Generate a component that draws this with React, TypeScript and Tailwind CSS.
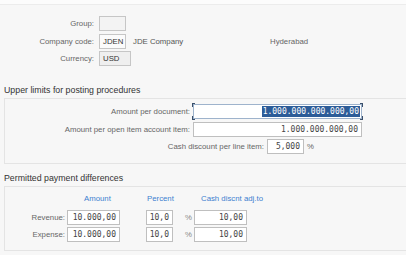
import React from "react";

const sans = { fontFamily: '"Liberation Sans", Arial, sans-serif' };

function Box({ w, bg = "bg-white", children, align = "justify-end", extra = "" }: { w: string; bg?: string; children?: React.ReactNode; align?: string; extra?: string }) {
  return (
    <div className={`${w} h-[15px] border border-[#bfbfbf] ${bg} flex items-center ${align} px-[3px] font-['DejaVu_Sans_Mono',monospace] text-[8px] leading-none text-[#444] ${extra}`}>
      {children}
    </div>
  );
}

export default function App() {
  return (
    <div className="w-[406px] h-[255px] overflow-hidden bg-[#f7f7f7] text-[7.8px] leading-none text-[#666]" style={sans}>
      <div className="h-[5px] bg-[#fcfcfc] border-b border-[#ececec]" />
      {/* Section 1 */}
      <div className="pt-[11px] flex flex-col">
        <div className="flex items-center h-[15px]">
          <div className="w-[96px] text-right pr-[2px]">Group:</div>
          <div className="ml-[3px] w-[27px] h-[15px] border border-[#c6c6c6] bg-[#f3f3f3]" />
        </div>
        <div className="flex items-center h-[15px] mt-[3px]">
          <div className="w-[96px] text-right pr-[2px]">Company code:</div>
          <div className="ml-[3px] w-[27px] h-[15px] border border-[#c6c6c6] bg-[#fbfbfb] flex items-center pl-[3px] text-[#333]">JDEN</div>
          <div className="ml-[7px] w-[137px] text-[#555]">JDE Company</div>
          <div className="text-[#666]">Hyderabad</div>
        </div>
        <div className="flex items-center h-[15px] mt-[2px]">
          <div className="w-[96px] text-right pr-[2px]">Currency:</div>
          <div className="ml-[3px] w-[32px] h-[15px] border border-[#c6c6c6] bg-[#efefef] flex items-center pl-[3px] text-[#333]">USD</div>
        </div>
      </div>

      {/* Heading 1 */}
      <div className="mt-[20px] h-[12px] flex items-start pl-[4px] text-[8.8px] text-[#333]">Upper limits for posting procedures</div>
      <div className="ml-[4px] border-t border-b border-l border-[#e4e4e4] pt-[5px] pb-[9px] flex flex-col">
        <div className="flex items-center h-[15px]">
          <div className="w-[188px] text-right pr-[3px]">Amount per document:</div>
          <div className="relative w-[169px] h-[15px] border border-[#9eb3cc] bg-white flex items-center justify-end pr-[1px] font-['DejaVu_Sans_Mono',monospace] text-[8px]">
            <span className="bg-[#2c5c98] text-white px-[1px] h-[11px] flex items-center">1.000.000.000.000,00</span>
            <span className="absolute left-[-2px] top-[-2px] w-[3px] h-[4px] border-l border-t border-[#3a4f6a]" />
            <span className="absolute left-[-2px] bottom-[-2px] w-[3px] h-[4px] border-l border-b border-[#3a4f6a]" />
            <span className="absolute right-[-2px] top-[-2px] w-[3px] h-[4px] border-r border-t border-[#3a4f6a]" />
            <span className="absolute right-[-2px] bottom-[-2px] w-[3px] h-[4px] border-r border-b border-[#3a4f6a]" />
          </div>
        </div>
        <div className="flex items-center h-[15px] mt-[3px]">
          <div className="w-[188px] text-right pr-[3px]">Amount per open item account item:</div>
          <Box w="w-[169px]">1.000.000.000,00</Box>
        </div>
        <div className="flex items-center h-[15px] mt-[2px]">
          <div className="w-[262px] text-right pr-[3px]">Cash discount per line item:</div>
          <Box w="w-[37px]">5,000</Box>
          <div className="ml-[3px]">%</div>
        </div>
      </div>

      {/* Heading 2 */}
      <div className="mt-[10px] h-[12px] flex items-start pl-[4px] text-[8.8px] text-[#333]">Permitted payment differences</div>
      <div className="ml-[4px] border-t border-b border-l border-[#e4e4e4] pt-[6px] pb-[8px] flex flex-col">
        <div className="flex items-center h-[12px] text-[#3d7fd0]">
          <div className="w-[79px]" />
          <div className="w-[63px]">Amount</div>
          <div className="w-[54px]">Percent</div>
          <div>Cash discnt adj.to</div>
        </div>
        {[
          ["Revenue:", "mt-[5px]"],
          ["Expense:", "mt-[2px]"],
        ].map(([l, m]) => (
          <div key={l} className={`flex items-center h-[15px] ${m}`}>
            <div className="w-[62px] text-right pr-[2px]">{l}</div>
            <Box w="w-[53px]">10.000,00</Box>
            <div className="w-[26px]" />
            <Box w="w-[27px]">10,0</Box>
            <div className="w-[21px] text-right pr-[2px] text-[#888]">%</div>
            <Box w="w-[53px]">10,00</Box>
          </div>
        ))}
      </div>
    </div>
  );
}
